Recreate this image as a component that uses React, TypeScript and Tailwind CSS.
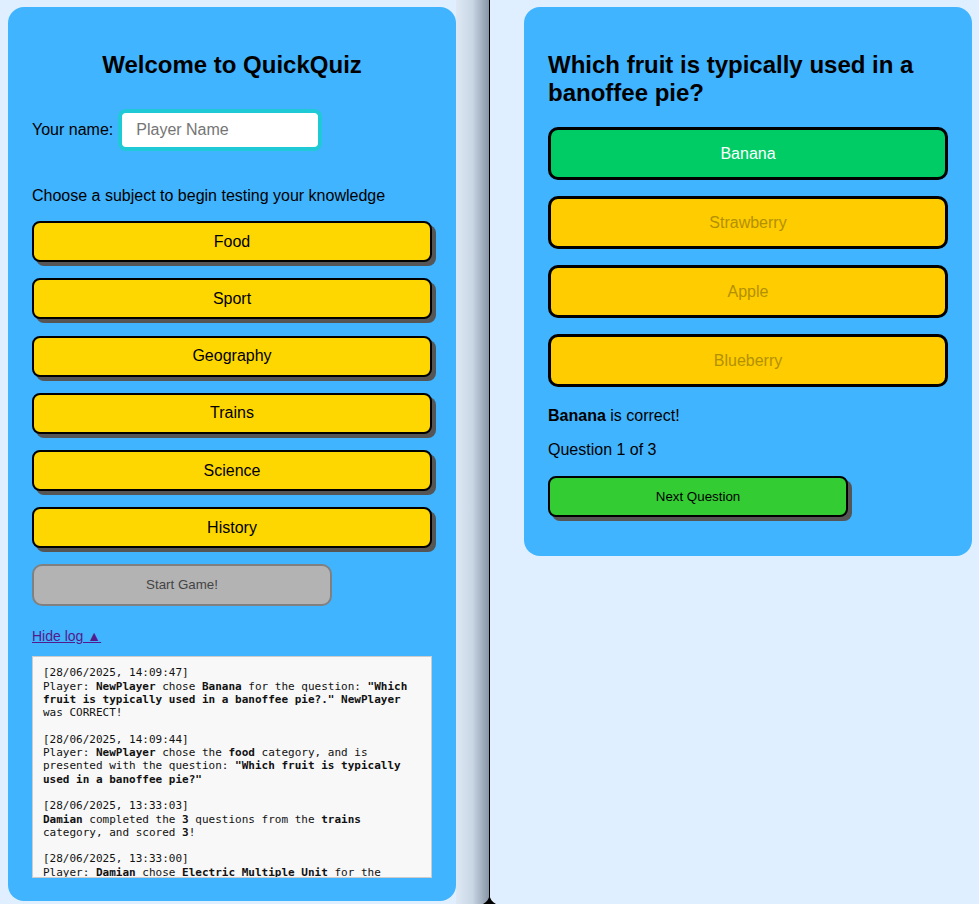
import React from "react";

const categories = ["Food", "Sport", "Geography", "Trains", "Science", "History"];

export default function App() {
  return (
    <div className="relative flex h-[904px] w-[979px] overflow-hidden bg-[#e0efff] font-['Liberation_Sans',Arial,sans-serif] text-black">
      {/* Left pane */}
      <div className="w-[456px] shrink-0 pl-2 pt-[7px]">
        <div className="flex h-[894px] w-[448px] flex-col rounded-[16px] bg-[#40b4ff] px-6">
          <h2 className="mt-[44px] h-[28px] text-center text-[24px] font-bold leading-[28px]">
            Welcome to QuickQuiz
          </h2>
          <div className="mt-[30px] flex h-[41px] items-center">
            <span className="text-[16px]">Your name:</span>
            <input
              placeholder="Player Name"
              className="ml-[5px] h-[42px] w-[204px] rounded-[8px] border-[4px] border-[#20c9d6] bg-white pl-[14px] text-[16px] outline-none placeholder:text-[#757575]"
            />
          </div>
          <p className="mt-[37px] h-[18px] text-[16px] leading-[18px]">
            Choose a subject to begin testing your knowledge
          </p>
          <div className="mt-[16px] flex flex-col gap-[16.25px]">
            {categories.map((c) => (
              <button
                key={c}
                className="h-[41px] w-[400px] rounded-[8px] border-2 border-black bg-[#ffd700] text-[16px] shadow-[4px_4px_0_#555]"
              >
                {c}
              </button>
            ))}
          </div>
          <button className="mt-[16px] h-[42px] w-[300px] rounded-[10px] border-2 border-[#808080] bg-[#b3b3b3] text-[13.33px] text-[#444]">
            Start Game!
          </button>
          <a className="mt-[21px] h-[18px] w-fit text-[14px] leading-[18px] text-[#551a8b] underline">
            Hide log ▲
          </a>
          <div className="mt-[11px] h-[222px] w-[400px] overflow-hidden border border-[#cccccc] bg-[#f8f8f8] px-[10px] pt-[9px] font-['DejaVu_Sans_Mono',monospace] text-[11px] leading-[13.3px] text-[#111]">
            <p>
              [28/06/2025, 14:09:47]
              <br />
              Player: <b>NewPlayer</b> chose <b>Banana</b> for the question: <b>"Which</b>
              <br />
              <b>fruit is typically used in a banoffee pie?."</b> <b>NewPlayer</b>
              <br />
              was CORRECT!
            </p>
            <p className="mt-[13.3px]">
              [28/06/2025, 14:09:44]
              <br />
              Player: <b>NewPlayer</b> chose the <b>food</b> category, and is
              <br />
              presented with the question: <b>"Which fruit is typically</b>
              <br />
              <b>used in a banoffee pie?"</b>
            </p>
            <p className="mt-[13.3px]">
              [28/06/2025, 13:33:03]
              <br />
              <b>Damian</b> completed the <b>3</b> questions from the <b>trains</b>
              <br />
              category, and scored <b>3</b>!
            </p>
            <p className="mt-[13.3px]">
              [28/06/2025, 13:33:00]
              <br />
              Player: <b>Damian</b> chose <b>Electric Multiple Unit</b> for the
              <br />
              question: <b>"What does the "EMU" stand for in railways?"</b>
            </p>
          </div>
        </div>
      </div>

      {/* Shadow strip */}
      <div className="h-full w-[33px] shrink-0 bg-gradient-to-r from-[#dfe9f5] via-[#c9d6e4] to-[#8796a6]" />
      {/* Divider */}
      <div className="h-full w-px shrink-0 bg-black" />

      {/* Right pane */}
      <div className="flex-1 pl-[34px] pt-[7px]">
        <div className="flex h-[549px] w-[448px] flex-col rounded-[16px] bg-[#40b4ff] px-6">
          <h2 className="mt-[44px] text-[24px] font-bold leading-[28px]">
            Which fruit is typically used in a banoffee pie?
          </h2>
          <div className="mt-[20px] flex flex-col gap-[16px]">
            <button className="h-[53px] w-[400px] rounded-[10px] border-[3px] border-black bg-[#00cc66] text-[16px] text-white">
              Banana
            </button>
            {["Strawberry", "Apple", "Blueberry"].map((a) => (
              <button
                key={a}
                className="h-[53px] w-[400px] rounded-[10px] border-[3px] border-black bg-[#ffcc00] text-[16px] text-[#b39000]"
              >
                {a}
              </button>
            ))}
          </div>
          <p className="mt-[20px] h-[18px] text-[16px] leading-[18px]">
            <b>Banana</b> is correct!
          </p>
          <p className="mt-[16px] h-[18px] text-[16px] leading-[18px]">Question 1 of 3</p>
          <button className="mt-[17px] h-[41px] w-[300px] rounded-[8px] border-2 border-black bg-[#33cc33] text-[13.33px] shadow-[4px_4px_0_#555]">
            Next Question
          </button>
        </div>
      </div>

      {/* Resize handle triangle */}
      <svg className="absolute left-[483px] top-[895px]" width="13" height="9" viewBox="0 0 13 9">
        <path d="M6.5 0 C7 4 9 7 13 9 L0 9 C4 7 6 4 6.5 0 Z" fill="#000" />
      </svg>
    </div>
  );
}
